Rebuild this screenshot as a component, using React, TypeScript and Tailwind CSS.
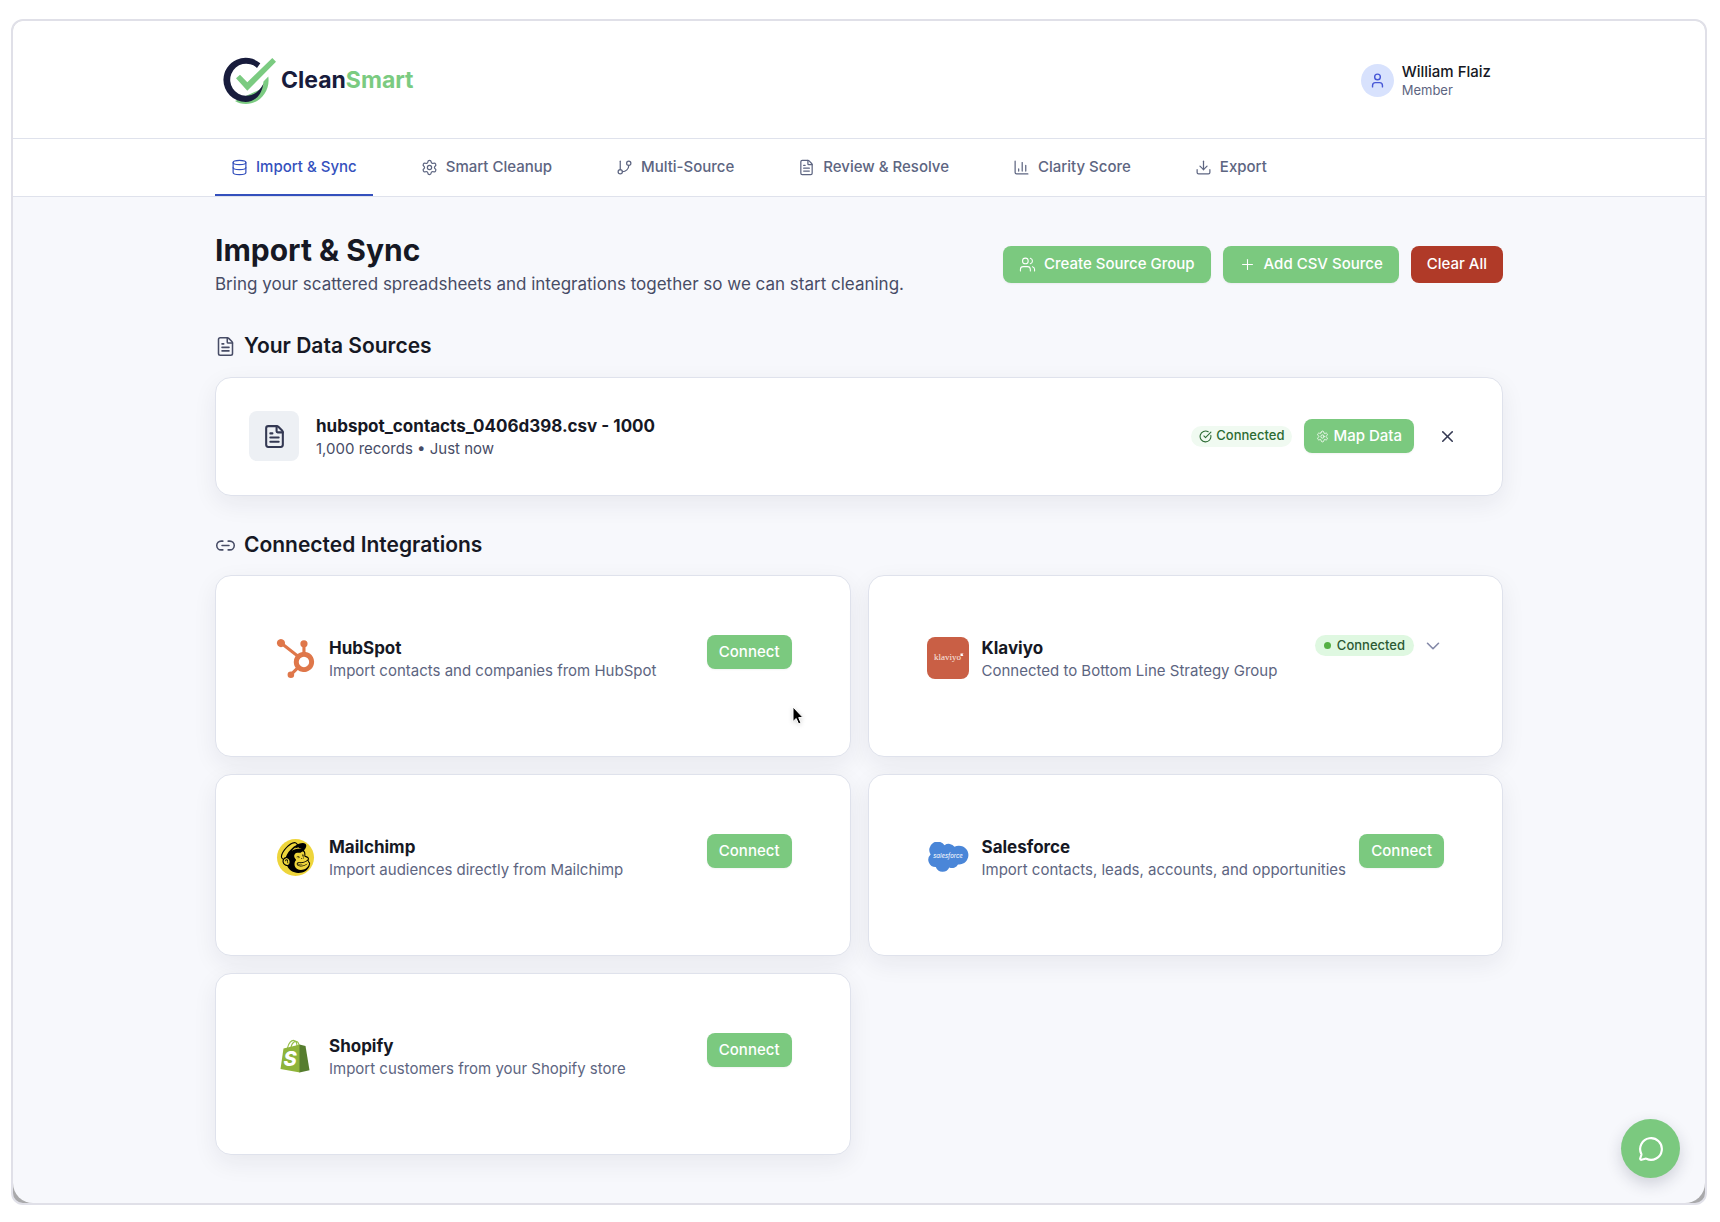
import type { ReactNode } from 'react';
import {
  ChartColumn,
  ChevronDown,
  CircleCheckBig,
  Database,
  Download,
  FileText,
  GitBranch,
  Link2,
  MessageCircle,
  Plus,
  Settings,
  User,
  Users,
  X,
} from 'lucide-react';
import { SiHubspot, SiMailchimp } from 'react-icons/si';

const tabs = [
  { label: 'Import & Sync', icon: Database, active: true },
  { label: 'Smart Cleanup', icon: Settings },
  { label: 'Multi-Source', icon: GitBranch },
  { label: 'Review & Resolve', icon: FileText },
  { label: 'Clarity Score', icon: ChartColumn },
  { label: 'Export', icon: Download },
];

const BrandMark = () => (
  <svg width="54" height="48" viewBox="0 0 54 48" fill="none" aria-hidden="true">
    <path
      d="M45.300 19.500C47.500 34 37 47 23 47C18.500 47 15 46 12 44L38 32Q40.300 29 40.500 24.500Z"
      fill="#7bcb81"
    />
    <path
      d="M37.300 6.300A22.300 22.300 0 0 0 0.400 22.700A22.300 22.300 0 0 0 22.700 45C31.500 45 38.500 38.500 40.300 27C36 35 30.500 38.700 22.700 38.700A16 16 0 1 1 34 10.900Z"
      fill="#181c3c"
    />
    <path d="M13 21.300L17 17.700L24.300 25.300L49.300 1L53 4.700L24.300 33.700Z" fill="#7bcb81" />
  </svg>
);

const KlaviyoLogo = () => (
  <svg width="42" height="42" viewBox="0 0 42 42" aria-hidden="true">
    <rect width="42" height="42" rx="8" fill="#c95f45" />
    <text x="7" y="23" fontFamily="Liberation Serif, serif" fontSize="9" fill="#fbe9e2">
      klaviyo
    </text>
    <path d="M33.500 16.500H36.500L35.600 17.700L36.500 19H33.500Z" fill="#fff" />
  </svg>
);

const SalesforceLogo = () => (
  <svg width="42" height="30" viewBox="0 0 42 30" aria-hidden="true">
    <path
      d="M17.500 3.300A7 7 0 0 1 27.500 4.800A9.400 9.400 0 1 1 31 22.400A6.800 6.800 0 0 1 22.300 25.500A7.300 7.300 0 0 1 8.800 25A7.300 7.300 0 0 1 3.600 12.400A8 8 0 0 1 17.500 3.300Z"
      fill="#4a86d8"
    />
    <text
      x="21"
      y="16"
      textAnchor="middle"
      fontFamily="Inter, sans-serif"
      fontSize="6"
      fontStyle="italic"
      fill="#fff"
    >
      salesforce
    </text>
  </svg>
);

const ShopifyLogo = () => (
  <svg width="30" height="34" viewBox="0 0 30 34" aria-hidden="true">
    <path
      d="M7.500 9C8.500 4 11.500 1 14 1.500C16.500 2 17 5 17 7.500M11 8C12 4 14.500 2 16.500 2.500C18.500 3 19 5 19 7"
      fill="none"
      stroke="#95bf47"
      strokeWidth="1.200"
    />
    <path d="M3.500 9.500L20 5.500V33.500L0.500 30Z" fill="#8fb43a" />
    <path d="M19.500 5.600L25.500 7L29.500 31.300L19.500 33.500Z" fill="#567d2e" />
    <text
      x="10"
      y="27"
      textAnchor="middle"
      fontFamily="Inter, sans-serif"
      fontSize="20"
      fontWeight="800"
      fontStyle="italic"
      fill="#fff"
    >
      S
    </text>
  </svg>
);

const MailchimpLogo = () => (
  <span className="flex size-[37px] items-center justify-center rounded-full bg-[#eed53b]">
    <SiMailchimp className="size-[31px] text-black" />
  </span>
);

const Pointer = () => (
  <svg
    className="absolute right-[45px] bottom-[30px] drop-shadow-sm"
    width="14"
    height="20"
    viewBox="0 0 14 20"
    aria-hidden="true"
  >
    <path
      d="M2 1V15.500L5.200 12.500L7.600 18L10 17L7.700 11.600H12Z"
      fill="#000"
      stroke="#fff"
      strokeWidth="1"
    />
  </svg>
);

interface GreenButtonProps {
  children: ReactNode;
  className: string;
}

const GreenButton = ({ children, className }: GreenButtonProps) => (
  <button
    type="button"
    className={`flex shrink-0 items-center rounded-lg bg-[#7bc97f] text-[15px] font-medium text-white shadow-xs ${className}`}
  >
    {children}
  </button>
);

interface SectionTitleProps {
  icon: ReactNode;
  children: ReactNode;
}

const SectionTitle = ({ icon, children }: SectionTitleProps) => (
  <h2 className="flex items-center gap-2 text-[21px] leading-7 font-semibold text-[#161824]">
    {icon}
    {children}
  </h2>
);

interface IntegrationCardProps {
  name: string;
  description: string;
  logo: ReactNode;
  connected?: boolean;
  children?: ReactNode;
}

const IntegrationCard = ({ name, description, logo, connected, children }: IntegrationCardProps) => (
  <article className="relative flex items-start justify-between rounded-2xl border border-[#dfe2ec] bg-white px-[58px] pt-[59px] pb-[75px] shadow-[0_8px_24px_rgba(30,32,60,0.07)]">
    <div className="flex items-center gap-[13px]">
      <div className="flex size-[42px] shrink-0 items-center justify-center">{logo}</div>
      <div>
        <h3 className="text-[17px] leading-[26px] font-bold text-[#161824]">{name}</h3>
        <p className="text-[15px] leading-5 text-[#5d6581]">{description}</p>
      </div>
    </div>
    {connected ? (
      <div className="flex h-[21px] items-center gap-2">
        <span className="flex h-[21px] items-center gap-1.5 rounded-full bg-[#dff8e1] px-[9px] text-[13px] font-medium text-[#2c5a33]">
          <span className="size-[7px] rounded-full bg-[#55b045]" />
          Connected
        </span>
        <button type="button" aria-label={`Show ${name} details`} className="text-[#8489a8]">
          <ChevronDown size={22} strokeWidth={1.75} />
        </button>
      </div>
    ) : (
      <GreenButton className="h-[34px] px-3">Connect</GreenButton>
    )}
    {children}
  </article>
);

export default function App() {
  return (
    <div className="bg-white pt-[19px] pr-[13px] pb-[17px] pl-[11px] font-[Inter,sans-serif]">
      <div className="relative overflow-hidden rounded-xl border-2 border-[#e0e0e8] bg-[#a9a9ab]">
        <div className="rounded-b-[20px] bg-[#f7f8fc]">
          <header className="border-b border-[#dfe2ec] bg-white">
            <div className="mx-auto flex h-[117px] max-w-[1288px] items-center justify-between px-2 pt-0.5">
              <a href="#home" className="flex items-center gap-1 text-[23px] font-bold text-[#181c3c]">
                <BrandMark />
                <span>
                  Clean<span className="text-[#7bcb81]">Smart</span>
                </span>
              </a>
              <div className="flex items-center gap-2 pr-1">
                <span className="flex size-[33px] items-center justify-center rounded-full bg-[#d8e2fd] text-[#4858d6]">
                  <User size={17} />
                </span>
                <div>
                  <p className="text-[15px] leading-5 font-medium text-[#161824]">William Flaiz</p>
                  <p className="text-[13px] leading-[17px] text-[#5d6581]">Member</p>
                </div>
              </div>
            </div>
          </header>

          <nav className="border-b border-[#dfe2ec] bg-white">
            <div className="mx-auto flex max-w-[1288px] gap-8">
              {tabs.map(({ label, icon: Icon, active }) => (
                <a
                  key={label}
                  href="#tab"
                  className={`flex h-[57px] items-center gap-2 border-b-2 px-4 pt-0.5 text-[15px] font-medium ${
                    active ? 'border-[#3450bd] text-[#3450bd]' : 'border-transparent text-[#5d6581]'
                  }`}
                >
                  <Icon size={17} strokeWidth={1.75} />
                  {label}
                </a>
              ))}
            </div>
          </nav>

          <main className="mx-auto max-w-[1288px] pt-[34px] pb-12">
            <div className="flex items-center justify-between">
              <div>
                <h1 className="text-[30px] leading-[39px] font-bold text-[#161824]">Import &amp; Sync</h1>
                <p className="text-[17px] leading-7 text-[#474c66]">
                  Bring your scattered spreadsheets and integrations together so we can start cleaning.
                </p>
              </div>
              <div className="flex items-center gap-3">
                <GreenButton className="h-[37px] gap-2 px-4">
                  <Users size={17} strokeWidth={1.5} />
                  Create Source Group
                </GreenButton>
                <GreenButton className="h-[37px] gap-2 px-4">
                  <Plus size={17} strokeWidth={1.5} />
                  Add CSV Source
                </GreenButton>
                <button
                  type="button"
                  className="h-[37px] rounded-lg bg-[#b03a28] px-4 text-[15px] font-medium text-white"
                >
                  Clear All
                </button>
              </div>
            </div>

            <section className="mt-[34px]">
              <SectionTitle icon={<FileText size={21} strokeWidth={1.75} className="text-[#474c66]" />}>
                Your Data Sources
              </SectionTitle>
              <div className="mt-[17px] flex items-center justify-between rounded-2xl border border-[#dfe2ec] bg-white px-[33px] pt-[33px] pb-[34px] shadow-[0_8px_24px_rgba(30,32,60,0.07)]">
                <div className="flex items-center gap-[17px]">
                  <div className="flex size-[50px] items-center justify-center rounded-lg bg-[#edf0f4] text-[#343953]">
                    <FileText size={25} strokeWidth={2} />
                  </div>
                  <div>
                    <h3 className="text-[17px] leading-[26px] font-bold text-[#161824]">
                      hubspot_contacts_0406d398.csv - 1000
                    </h3>
                    <p className="text-[15px] leading-5 text-[#474c66]">1,000 records • Just now</p>
                  </div>
                </div>
                <div className="flex items-center gap-3">
                  <span className="flex h-[21px] items-center gap-1 rounded-full bg-[#f0faf1] px-2 text-[13px] font-medium text-[#2c6b33]">
                    <CircleCheckBig size={13} />
                    Connected
                  </span>
                  <GreenButton className="h-[34px] gap-1 px-3">
                    <Settings size={13} strokeWidth={1.5} />
                    Map Data
                  </GreenButton>
                  <button
                    type="button"
                    aria-label="Remove source"
                    className="flex h-[34px] w-[43px] items-center justify-center text-[#343953]"
                  >
                    <X size={19} />
                  </button>
                </div>
              </div>
            </section>

            <section className="mt-[35px]">
              <SectionTitle icon={<Link2 size={21} strokeWidth={1.75} className="text-[#474c66]" />}>
                Connected Integrations
              </SectionTitle>
              <div className="mt-4 grid grid-cols-2 gap-[17px]">
                <IntegrationCard
                  name="HubSpot"
                  description="Import contacts and companies from HubSpot"
                  logo={<SiHubspot className="size-[39px] text-[#df774a]" />}
                >
                  <Pointer />
                </IntegrationCard>
                <IntegrationCard
                  name="Klaviyo"
                  description="Connected to Bottom Line Strategy Group"
                  logo={<KlaviyoLogo />}
                  connected
                />
                <IntegrationCard
                  name="Mailchimp"
                  description="Import audiences directly from Mailchimp"
                  logo={<MailchimpLogo />}
                />
                <IntegrationCard
                  name="Salesforce"
                  description="Import contacts, leads, accounts, and opportunities"
                  logo={<SalesforceLogo />}
                />
                <IntegrationCard
                  name="Shopify"
                  description="Import customers from your Shopify store"
                  logo={<ShopifyLogo />}
                />
              </div>
            </section>
          </main>
        </div>

        <button
          type="button"
          aria-label="Open chat"
          className="absolute right-[25px] bottom-[25px] flex size-[59px] items-center justify-center rounded-full bg-[#7bc97f] text-white shadow-[0_6px_16px_rgba(30,32,60,0.18)]"
        >
          <MessageCircle size={26} strokeWidth={2} />
        </button>
      </div>
    </div>
  );
}
